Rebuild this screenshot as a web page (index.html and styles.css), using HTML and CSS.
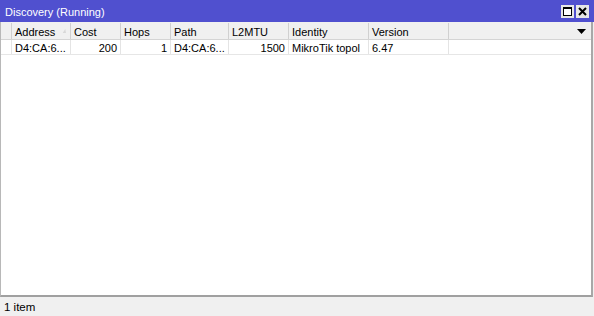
FILE: index.html
```html
<!DOCTYPE html>
<html>
<head>
<meta charset="utf-8">
<link rel="stylesheet" href="styles.css">
</head>
<body>
<div class="window">
  <div class="titlebar">
    <span class="title">Discovery (Running)</span>
    <div class="tbuttons">
      <span class="tbtn"><svg width="13" height="13" viewBox="0 0 13 13"><rect x="2.5" y="2.5" width="8" height="8" fill="#fff" stroke="#000" stroke-width="1"/><line x1="2.5" y1="3.5" x2="10.5" y2="3.5" stroke="#000"/></svg></span>
      <span class="tbtn"><svg width="13" height="13" viewBox="0 0 13 13"><path d="M3 3 L10 10 M10 3 L3 10" stroke="#000" stroke-width="2"/></svg></span>
    </div>
  </div>
  <div class="list">
    <div class="row head">
      <div class="c c0"></div>
      <div class="c c1">Address<svg class="sort" width="7" height="8" viewBox="0 0 7 8"><path d="M1 7 L5 1 L6 7 Z" fill="#d8d8d8"/></svg></div>
      <div class="c c2">Cost</div>
      <div class="c c3">Hops</div>
      <div class="c c4">Path</div>
      <div class="c c5">L2MTU</div>
      <div class="c c6">Identity</div>
      <div class="c c7">Version</div>
      <div class="c c8"><svg class="drop" width="9" height="5" viewBox="0 0 9 5"><path d="M0 0 H9 L4.5 5 Z" fill="#000"/></svg></div>
    </div>
    <div class="row data">
      <div class="c c0"></div>
      <div class="c c1">D4:CA:6...</div>
      <div class="c c2 r">200</div>
      <div class="c c3 r">1</div>
      <div class="c c4">D4:CA:6...</div>
      <div class="c c5 r">1500</div>
      <div class="c c6">MikroTik topol</div>
      <div class="c c7">6.47</div>
      <div class="c c8"></div>
    </div>
  </div>
  <div class="status">1 item</div>
</div>
</body>
</html>
```

FILE: styles.css
```css
html, body {
  margin: 0;
  padding: 0;
}
body {
  width: 594px;
  height: 316px;
  overflow: hidden;
  font-family: "Liberation Sans", Arial, sans-serif;
  font-size: 11px;
  color: #000;
  background: #f0f0f0;
}
.window {
  width: 594px;
  height: 316px;
  display: flex;
  flex-direction: column;
}
.titlebar {
  height: 22px;
  background: #5050cf;
  display: flex;
  align-items: center;
  justify-content: space-between;
  padding: 0 5px 0 5px;
  flex: none;
}
.title {
  color: #fff;
  font-size: 11px;
  padding-top: 1px;
}
.tbuttons {
  display: flex;
  gap: 2px;
  padding-top: 1px;
}
.tbtn {
  width: 13px;
  height: 13px;
  background: #e6e6e6;
  display: block;
}
.tbtn svg { display: block; }
.list {
  flex: 1;
  background: #fff;
  border-left: 1px solid #b8b8b8;
  border-right: 2px solid #a8a8a8;
  border-bottom: 2px solid #a0a0a0;
  margin-right: 1px;
}
.row {
  display: flex;
}
.row.head {
  background: #f0f0f0;
  border-bottom: 1px solid #d4d4d4;
  height: 16px;
  padding-top: 1px;
}
.row.data {
  height: 14px;
  border-bottom: 1px solid #e6e6e6;
}
.c {
  flex: none;
  box-sizing: border-box;
  padding: 2px 3px 0;
  border-right: 1px solid #d0d0d0;
  white-space: nowrap;
  overflow: hidden;
  display: flex;
  align-items: center;
  line-height: 13px;
}
.data .c { border-right-color: #e4e4e4; }
.c.r { justify-content: flex-end; }
.c0 { width: 11px; }
.c1 { width: 59px; }
.c2 { width: 50px; }
.c3 { width: 50px; }
.c4 { width: 58px; }
.c5 { width: 60px; }
.c6 { width: 80px; }
.c7 { width: 80px; }
.c8 { flex: 1; border-right: 0; justify-content: flex-end; padding-right: 5px; padding-top: 0; }
.sort { margin-left: 7px; margin-top: -2px; }
.status {
  height: 19px;
  flex: none;
  padding-left: 4px;
  display: flex;
  align-items: center;
  font-size: 11.5px;
}
```
